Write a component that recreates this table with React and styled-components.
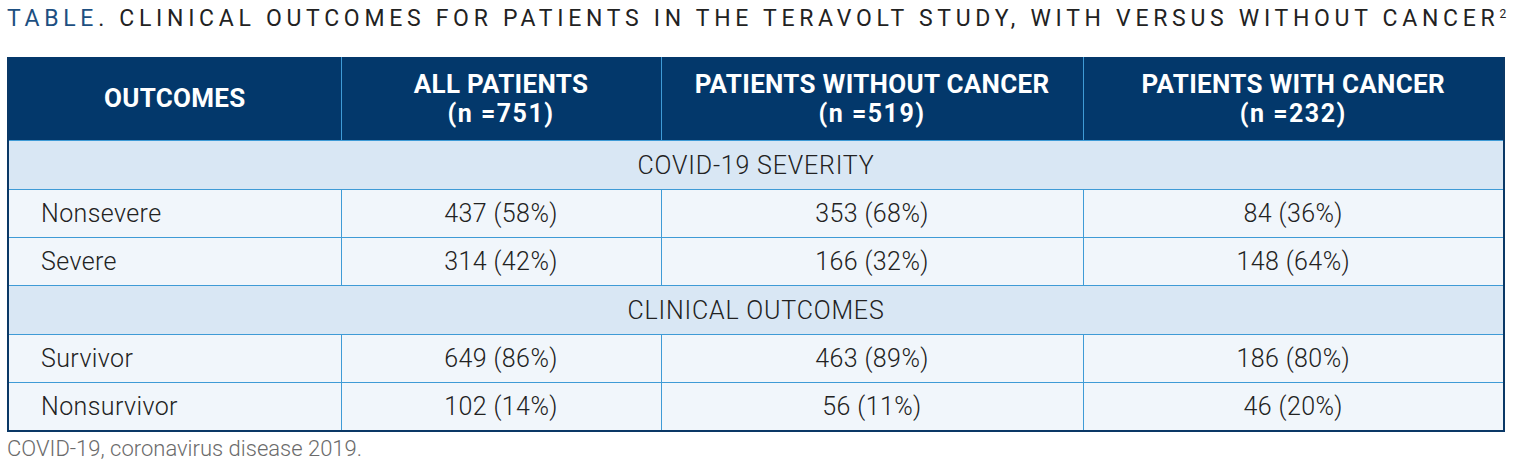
import React from "react";
import styled, { createGlobalStyle } from "styled-components";

const GlobalStyle = createGlobalStyle`
  body {
    margin: 0;
    background: #ffffff;
  }
`;

const font = `"Roboto", "Liberation Sans", sans-serif`;

const Page = styled.div`
  padding: 7px 11px 0 7px;
  font-family: ${font};
`;

const Title = styled.h1`
  margin: 0;
  font-family: ${font};
  font-weight: 400;
  font-size: 23px;
  line-height: 23px;
  letter-spacing: 4.7px;
  color: #222222;
  white-space: nowrap;
`;

const TitleTag = styled.span`
  color: #1d4f81;
`;

const Sup = styled.sup`
  font-size: 12px;
  line-height: 0;
  vertical-align: 8px;
  letter-spacing: 0;
`;

const Table = styled.table`
  margin-top: 27px;
  width: 100%;
  border-collapse: collapse;
  table-layout: fixed;
  border-left: 2px solid #0a3866;
  border-right: 2px solid #0a3866;
  border-bottom: 2px solid #0a3866;
`;

const HeadCell = styled.th`
  background: #03386b;
  color: #ffffff;
  font-weight: 700;
  font-size: 26px;
  line-height: 29px;
  letter-spacing: 0.3px;
  height: 83px;
  padding: 0 8px;
  text-align: center;
  vertical-align: middle;
  border-left: 1px solid #3f9bd6;
  &:first-child {
    border-left: none;
  }
`;

const Count = styled.span`
  font-size: 25px;
  letter-spacing: 1.5px;
`;

const SectionCell = styled.td`
  background: #d9e7f4;
  color: #222222;
  font-size: 25px;
  font-weight: 300;
  letter-spacing: 0.8px;
  height: 48px;
  padding: 0;
  text-align: center;
  border-top: 1px solid #3f9bd6;
  border-bottom: 1px solid #3f9bd6;
`;

const Cell = styled.td`
  background: #f1f6fb;
  color: #222222;
  font-size: 25px;
  font-weight: 300;
  letter-spacing: 0.4px;
  height: 47px;
  padding: ${(p) => (p.$label ? "0 0 0 32px" : "0")};
  text-align: ${(p) => (p.$label ? "left" : "center")};
  border: 1px solid #3f9bd6;
  &:first-child {
    border-left: none;
  }
  &:last-child {
    border-right: none;
  }
`;

const Footnote = styled.p`
  margin: 7px 0 0;
  font-size: 22px;
  line-height: 20px;
  font-weight: 300;
  color: #6b6b6b;
`;

const sections = [
  {
    title: "COVID-19 SEVERITY",
    rows: [
      ["Nonsevere", "437 (58%)", "353 (68%)", "84 (36%)"],
      ["Severe", "314 (42%)", "166 (32%)", "148 (64%)"],
    ],
  },
  {
    title: "CLINICAL OUTCOMES",
    rows: [
      ["Survivor", "649 (86%)", "463 (89%)", "186 (80%)"],
      ["Nonsurvivor", "102 (14%)", "56 (11%)", "46 (20%)"],
    ],
  },
];

const headers = [
  ["ALL PATIENTS", "(n =751)"],
  ["PATIENTS WITHOUT CANCER", "(n =519)"],
  ["PATIENTS WITH CANCER", "(n =232)"],
];

export default function App() {
  return (
    <Page>
      <GlobalStyle />
      <Title>
        <TitleTag>TABLE</TitleTag>. CLINICAL OUTCOMES FOR PATIENTS IN THE
        TERAVOLT STUDY, WITH VERSUS WITHOUT CANCER<Sup>2</Sup>
      </Title>
      <Table>
        <colgroup>
          <col style={{ width: "333px" }} />
          <col style={{ width: "320px" }} />
          <col style={{ width: "422px" }} />
          <col />
        </colgroup>
        <thead>
          <tr>
            <HeadCell>OUTCOMES</HeadCell>
            {headers.map(([label, n]) => (
              <HeadCell key={label}>
                {label}
                <br />
                <Count>{n}</Count>
              </HeadCell>
            ))}
          </tr>
        </thead>
        <tbody>
          {sections.map((s) => (
            <React.Fragment key={s.title}>
              <tr>
                <SectionCell colSpan={4}>{s.title}</SectionCell>
              </tr>
              {s.rows.map((r) => (
                <tr key={r[0]}>
                  <Cell $label>{r[0]}</Cell>
                  <Cell>{r[1]}</Cell>
                  <Cell>{r[2]}</Cell>
                  <Cell>{r[3]}</Cell>
                </tr>
              ))}
            </React.Fragment>
          ))}
        </tbody>
      </Table>
      <Footnote>COVID-19, coronavirus disease 2019.</Footnote>
    </Page>
  );
}
